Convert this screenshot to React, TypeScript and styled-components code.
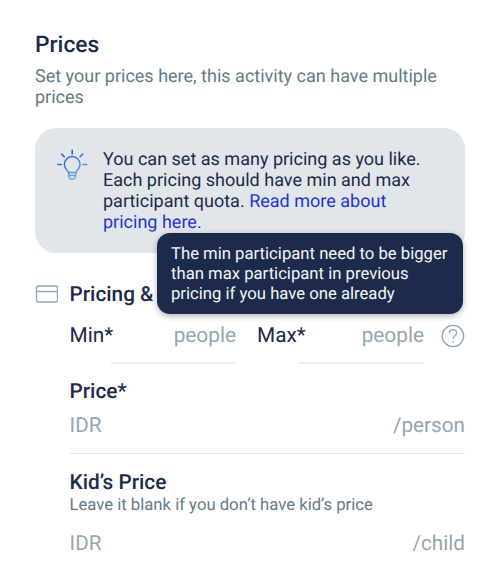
import React from "react";
import styled, { createGlobalStyle } from "styled-components";

const navy = "#1c2a4b";
const slate = "#647b87";
const mist = "#93a7b4";
const line = "#dfe7ec";

const GlobalStyle = createGlobalStyle`
  * { box-sizing: border-box; }
  body { margin: 0; background: #fff; font-family: Roboto, sans-serif; color: ${navy}; text-rendering: geometricPrecision; }
  h1, h2, h3, p { margin: 0; }
`;

const Page = styled.main`
  width: 500px;
  height: 566px;
  padding: 31px 35px 0;
  overflow: hidden;
`;

const Title = styled.h1`
  font-size: 22.8px;
  line-height: 27px;
  font-weight: 500;
`;

const Intro = styled.p`
  margin-top: 9px;
  font-size: 18.03px;
  line-height: 20.9px;
  color: ${slate};
`;

const Notice = styled.aside`
  display: flex;
  gap: 15px;
  margin-top: 19px;
  height: 125px;
  padding: 22px 24px 0 22px;
  border-radius: 21px;
  background: #e1e6ea;
`;

const NoticeIcon = styled.svg`
  flex: none;
  margin-top: -0.5px;
`;

const NoticeText = styled.p`
  width: 330px;
  font-size: 18.03px;
  line-height: 20.9px;
`;

const Link = styled.a`
  color: #1d35d0;
`;

const SectionHeader = styled.header`
  position: relative;
  display: flex;
  align-items: center;
  gap: 11.5px;
  margin-top: 29px;
  height: 25px;
`;

const SectionTitle = styled.h2`
  padding-top: 2px;
  font-size: 20.8px;
  line-height: 25px;
  font-weight: 500;
`;

const Tooltip = styled.div`
  position: absolute;
  left: 122px;
  top: -48.5px;
  width: 305.5px;
  height: 80.5px;
  padding: 12px 10px 0 14px;
  border-radius: 13px;
  background: ${navy};
  color: #f4f6f8;
  font-size: 16.68px;
  line-height: 19.6px;
  white-space: nowrap;
  box-shadow: 0 2px 6px rgba(0, 0, 0, 0.3);
`;

const Fields = styled.div`
  padding-left: 34.5px;
`;

const QuotaRow = styled.div`
  display: flex;
  height: 57px;
`;

const QuotaLabel = styled.label<{ $width: number }>`
  width: ${(p) => p.$width}px;
  padding-top: 17px;
  font-size: 20.8px;
  line-height: 24px;
  white-space: nowrap;
`;

const QuotaInput = styled.div<{ $gap: number }>`
  width: 125px;
  margin-right: ${(p) => p.$gap}px;
  padding-top: 17px;
  border-bottom: 2px solid #e8eef2;
  color: ${mist};
  font-size: 20.8px;
  line-height: 24px;
  text-align: right;
`;

const HelpIcon = styled.svg`
  flex: none;
  margin-top: 17px;
`;

const FieldLabel = styled.h3<{ $top: number }>`
  margin-top: ${(p) => p.$top}px;
  font-size: 20.8px;
  line-height: 24px;
  font-weight: 500;
`;

const Hint = styled.p`
  padding-top: 1px;
  font-size: 16.68px;
  line-height: 20px;
  color: ${slate};
`;

const PriceInput = styled.div<{ $top: number }>`
  display: flex;
  justify-content: space-between;
  margin-top: ${(p) => p.$top}px;
  height: 40px;
  border-bottom: 1px solid ${line};
  color: ${mist};
  font-size: 20.7px;
  line-height: 24px;
`;

function Bulb() {
  return (
    <NoticeIcon width="31" height="32" viewBox="0 0 31 32" fill="none" stroke="url(#glow)" strokeWidth="1.5" strokeLinecap="round">
      <defs>
        <linearGradient id="glow" gradientUnits="userSpaceOnUse" x1="7" y1="9" x2="17" y2="31">
          <stop stopColor="#3056d6" />
          <stop offset="1" stopColor="#68b9e2" />
        </linearGradient>
      </defs>
      <path d="M11.5 23.5C11.5 22 7.3 20 7.3 15.5a7.9 7.9 0 1 1 15.8 0c0 4.5-4.2 6.5-4.2 8z" />
      <path d="M11.7 23.5v3.3a3.5 3.5 0 0 0 7 0v-3.3M11.8 26.5h6.9" />
      <path d="M15.2 1.2V5M4.6 5l2.7 2.7M25.8 5l-2.7 2.7M.8 15.5h3.6M26 15.5h3.8" />
    </NoticeIcon>
  );
}

function Card() {
  return (
    <svg width="23" height="18" viewBox="0 0 23 18" fill="none" stroke="#91a8b5" strokeWidth="1.4">
      <rect x="1.5" y="1" width="21" height="16" rx="2" />
      <path d="M1.5 6.5h21" />
    </svg>
  );
}

function Help() {
  return (
    <HelpIcon width="24" height="24" viewBox="0 0 24 24" fill="none" stroke="#91a8b5" strokeWidth="1.3">
      <circle cx="12" cy="12" r="10.7" />
      <path d="M8.4 9.2c0-2.2 1.5-3.5 3.6-3.5s3.6 1.3 3.6 3.3c0 2.8-3.5 2.7-3.5 5.8" strokeLinecap="round" />
      <circle cx="12" cy="17.8" r=".9" fill="#91a8b5" stroke="none" />
    </HelpIcon>
  );
}

export default function App() {
  return (
    <Page>
      <GlobalStyle />
      <Title>Prices</Title>
      <Intro>Set your prices here, this activity can have multiple prices</Intro>
      <Notice>
        <Bulb />
        <NoticeText>
          You can set as many pricing as you like.
          <br />
          Each pricing should have min and max
          <br />
          participant quota. <Link>Read more about<br />pricing here.</Link>
        </NoticeText>
      </Notice>
      <SectionHeader>
        <Card />
        <SectionTitle>Pricing &amp;</SectionTitle>
        <Tooltip role="tooltip">
          The min participant need to be bigger
          <br />
          than max participant in previous
          <br />
          pricing if you have one already
        </Tooltip>
      </SectionHeader>
      <Fields>
        <QuotaRow>
          <QuotaLabel $width={41.5}>Min*</QuotaLabel>
          <QuotaInput $gap={21}>people</QuotaInput>
          <QuotaLabel $width={42}>Max*</QuotaLabel>
          <QuotaInput $gap={16.5}>people</QuotaInput>
          <Help />
        </QuotaRow>
        <FieldLabel $top={16.5}>Price*</FieldLabel>
        <PriceInput $top={9.5}>
          <span>IDR</span>
          <span>/person</span>
        </PriceInput>
        <FieldLabel $top={17}>Kid’s Price</FieldLabel>
        <Hint>Leave it blank if you don’t have kid’s price</Hint>
        <PriceInput $top={16}>
          <span>IDR</span>
          <span>/child</span>
        </PriceInput>
      </Fields>
    </Page>
  );
}
